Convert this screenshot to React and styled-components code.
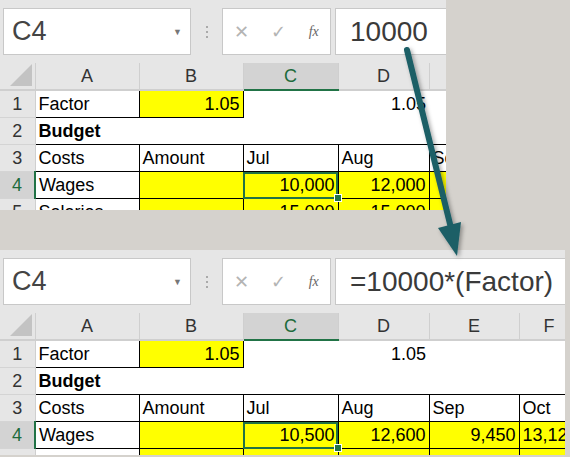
import React from "react";
import styled, { createGlobalStyle } from "styled-components";

const Global = createGlobalStyle`
  body { margin: 0; background: #d5d2cd; font-family: "Liberation Sans", Arial, sans-serif; }
`;

const COLS = [
  { key: "A", w: 104 },
  { key: "B", w: 104 },
  { key: "C", w: 95 },
  { key: "D", w: 91 },
  { key: "E", w: 90 },
  { key: "F", w: 60 },
];

const Page = styled.div`
  position: relative;
  width: 570px;
  height: 457px;
  display: flex;
  flex-direction: column;
  gap: 40px;
`;

const Panel = styled.div`
  width: ${(p) => p.$w}px;
  height: ${(p) => p.$h}px;
  overflow: hidden;
  background: #fff;
  flex-shrink: 0;
`;

const Bar = styled.div`
  display: flex;
  align-items: center;
  height: 63px;
  background: #e6e6e6;
  padding: 0 0 0 3px;
  box-sizing: border-box;
`;

const Box = styled.div`
  height: 47px;
  background: #fff;
  border: 1px solid #c8c8c8;
  box-sizing: border-box;
  display: flex;
  align-items: center;
  color: #444;
`;

const NameBox = styled(Box)`
  width: 188px;
  padding: 0 8px;
  font-size: 27px;
  justify-content: space-between;
`;

const Caret = styled.span`
  font-size: 9px;
  color: #777;
`;

const Dots = styled.div`
  width: 31px;
  display: flex;
  flex-direction: column;
  align-items: center;
  gap: 3px;
`;

const Dot = styled.span`
  width: 2px;
  height: 2px;
  background: #aaa;
`;

const Buttons = styled(Box)`
  width: 109px;
  justify-content: space-around;
  color: #b4b4b4;
  font-size: 18px;
`;

const Fx = styled.span`
  font-family: "Liberation Serif", serif;
  font-style: italic;
  font-size: 14px;
  color: #666;
`;

const Formula = styled(Box)`
  flex: 1;
  margin-left: 4px;
  padding-left: 14px;
  font-size: 28px;
  color: #3a3a3a;
  white-space: nowrap;
  border-right: none;
`;

const Grid = styled.table`
  border-collapse: collapse;
  table-layout: fixed;
  width: 579px;
  font-size: 18px;
  color: #000;
`;

const Head = styled.th`
  height: 26px;
  padding: 0;
  font-weight: normal;
  background: ${(p) => (p.$sel ? "#d3d3d3" : "#e6e6e6")};
  color: ${(p) => (p.$sel ? "#1d6b3c" : "#333")};
  border-right: 1px solid #cfcfcf;
  border-bottom: 2px solid ${(p) => (p.$sel ? "#217346" : "#cfcfcf")};
  text-align: center;
  position: relative;
`;

const Corner = styled.div`
  position: absolute;
  right: 3px;
  bottom: 3px;
  width: 0;
  height: 0;
  border-left: 22px solid transparent;
  border-bottom: 22px solid #c3c3c3;
`;

const RowNum = styled.td`
  height: 26px;
  padding: 0;
  text-align: center;
  background: ${(p) => (p.$sel ? "#d3d3d3" : "#e6e6e6")};
  color: ${(p) => (p.$sel ? "#1d6b3c" : "#333")};
  border-bottom: 1px solid #d4d4d4;
  border-right: ${(p) => (p.$sel ? "2px solid #217346" : "1px solid #cfcfcf")};
`;

const Cell = styled.td`
  height: 26px;
  padding: 0 3px;
  white-space: nowrap;
  overflow: hidden;
  text-align: ${(p) => p.$align || "left"};
  font-weight: ${(p) => (p.$bold ? "bold" : "normal")};
  background: ${(p) => (p.$yellow ? "#ffff00" : "#fff")};
  border: ${(p) => (p.$border ? "1px solid #000" : "none")};
  ${(p) => p.$active && "outline: 2px solid #217346; outline-offset: -2px; position: relative; overflow: visible;"}
`;

const Handle = styled.span`
  position: absolute;
  right: -4px;
  bottom: -4px;
  width: 6px;
  height: 6px;
  background: #217346;
  border: 1px solid #fff;
`;

const Arrow = styled.svg`
  position: absolute;
  left: 0;
  top: 0;
  pointer-events: none;
`;

const Sheet = ({ width, height, formula, rows }) => (
  <Panel $w={width} $h={height}>
    <Bar>
      <NameBox>
        C4 <Caret>▼</Caret>
      </NameBox>
      <Dots>
        <Dot />
        <Dot />
        <Dot />
      </Dots>
      <Buttons>
        <span>✕</span>
        <span>✓</span>
        <Fx>fx</Fx>
      </Buttons>
      <Formula>{formula}</Formula>
    </Bar>
    <Grid>
      <colgroup>
        <col style={{ width: 35 }} />
        {COLS.map((c) => (
          <col key={c.key} style={{ width: c.w }} />
        ))}
      </colgroup>
      <thead>
        <tr>
          <Head><Corner /></Head>
          {COLS.map((c) => (
            <Head key={c.key} $sel={c.key === "C"}>{c.key}</Head>
          ))}
        </tr>
      </thead>
      <tbody>
        {rows.map((r, i) => (
          <tr key={i}>
            <RowNum $sel={i === 3}>{i + 1}</RowNum>
            {r.map((c, j) => (
              <Cell key={j} $align={c.align} $bold={c.bold} $yellow={c.y} $border={c.b} $active={c.active}>
                {c.t}
                {c.active && <Handle />}
              </Cell>
            ))}
          </tr>
        ))}
      </tbody>
    </Grid>
  </Panel>
);

const makeRows = (v) => [
  [
    { t: "Factor", b: true },
    { t: "1.05", align: "right", y: true, b: true },
    { t: "" },
    { t: "1.05", align: "right" },
    { t: "" },
    { t: "" },
  ],
  [{ t: "Budget", bold: true }, {}, {}, {}, {}, {}],
  [
    { t: "Costs", b: true },
    { t: "Amount", b: true },
    { t: "Jul", b: true },
    { t: "Aug", b: true },
    { t: "Sep", b: true },
    { t: "Oct", b: true },
  ],
  [
    { t: "Wages", b: true },
    { y: true, b: true },
    { t: v[0], align: "right", y: true, b: true, active: true },
    { t: v[1], align: "right", y: true, b: true },
    { t: v[2], align: "right", y: true, b: true },
    { t: v[3], y: true, b: true },
  ],
  [
    { t: "Salaries", b: true },
    { y: true, b: true },
    { t: "15,000", align: "right", y: true, b: true },
    { t: "15,000", align: "right", y: true, b: true },
    { y: true, b: true },
    { y: true, b: true },
  ],
];

const App = () => {
  const top = makeRows(["10,000", "12,000", "9,000", "12,500"]);
  const bottom = makeRows(["10,500", "12,600", "9,450", "13,125"]);
  return (
    <>
      <Global />
      <Page>
        <Sheet width={446} height={210} formula="10000" rows={top} />
        <Sheet width={565} height={205} formula="=10000*(Factor)" rows={bottom} />
        <Arrow width="570" height="457">
          <defs>
            <filter id="sh" x="-50%" y="-50%" width="200%" height="200%">
              <feDropShadow dx="2" dy="2" stdDeviation="2" floodColor="#000" floodOpacity="0.35" />
            </filter>
          </defs>
          <g filter="url(#sh)">
            <line x1="407" y1="50" x2="452" y2="232" stroke="#1c5e66" strokeWidth="6" strokeLinecap="round" />
            <polygon points="438,228 461,222 457,256" fill="#1c5e66" />
          </g>
        </Arrow>
      </Page>
    </>
  );
};

export default App;
